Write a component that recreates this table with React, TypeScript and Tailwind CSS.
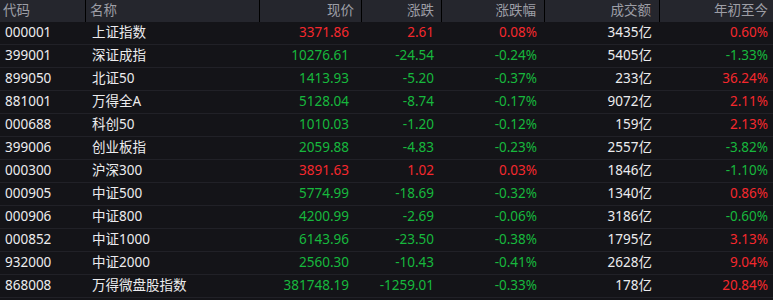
import React from "react";

type Row = {
  code: string;
  name: string;
  price: string;
  chg: string;
  pct: string;
  vol: string;
  ytd: string;
};

const rows: Row[] = [
  { code: "000001", name: "上证指数", price: "3371.86", chg: "2.61", pct: "0.08%", vol: "3435亿", ytd: "0.60%" },
  { code: "399001", name: "深证成指", price: "10276.61", chg: "-24.54", pct: "-0.24%", vol: "5405亿", ytd: "-1.33%" },
  { code: "899050", name: "北证50", price: "1413.93", chg: "-5.20", pct: "-0.37%", vol: "233亿", ytd: "36.24%" },
  { code: "881001", name: "万得全A", price: "5128.04", chg: "-8.74", pct: "-0.17%", vol: "9072亿", ytd: "2.11%" },
  { code: "000688", name: "科创50", price: "1010.03", chg: "-1.20", pct: "-0.12%", vol: "159亿", ytd: "2.13%" },
  { code: "399006", name: "创业板指", price: "2059.88", chg: "-4.83", pct: "-0.23%", vol: "2557亿", ytd: "-3.82%" },
  { code: "000300", name: "沪深300", price: "3891.63", chg: "1.02", pct: "0.03%", vol: "1846亿", ytd: "-1.10%" },
  { code: "000905", name: "中证500", price: "5774.99", chg: "-18.69", pct: "-0.32%", vol: "1340亿", ytd: "0.86%" },
  { code: "000906", name: "中证800", price: "4200.99", chg: "-2.69", pct: "-0.06%", vol: "3186亿", ytd: "-0.60%" },
  { code: "000852", name: "中证1000", price: "6143.96", chg: "-23.50", pct: "-0.38%", vol: "1795亿", ytd: "3.13%" },
  { code: "932000", name: "中证2000", price: "2560.30", chg: "-10.43", pct: "-0.41%", vol: "2628亿", ytd: "9.04%" },
  { code: "868008", name: "万得微盘股指数", price: "381748.19", chg: "-1259.01", pct: "-0.33%", vol: "178亿", ytd: "20.84%" },
];

const RED = "text-[#f5282d]";
const GREEN = "text-[#17b83d]";

const tone = (v: string) => (v.startsWith("-") ? GREEN : RED);

const gridCols = "grid grid-cols-[86px_174px_102px_80px_103px_115px_113px]";

export default function App() {
  return (
    <div
      className="w-[773px] h-[300px] overflow-hidden bg-[#141418] text-[13.5px] leading-none"
      style={{ fontFamily: '"Noto Sans", "Noto Sans CJK SC", sans-serif' }}
    >
      <div className={`${gridCols} h-[22px] bg-[#25262d] text-[#9d9ea6]`}>
        <div className="flex items-center pl-[3px] border-r border-black">代码</div>
        <div className="flex items-center pl-1 border-r border-black">名称</div>
        <div className="flex items-center justify-end pr-[7px] border-r border-black">现价</div>
        <div className="flex items-center justify-end pr-[7px] border-r border-black">涨跌</div>
        <div className="flex items-center justify-end pr-2 border-r border-black">涨跌幅</div>
        <div className="flex items-center justify-end pr-2 border-r border-black">成交额</div>
        <div className="flex items-center justify-end pr-[5px]">年初至今</div>
      </div>
      {rows.map((r) => (
        <div
          key={r.code}
          className={`${gridCols} h-[23px] border-b border-[#212127] text-[#ececee]`}
        >
          <div className="flex items-center pl-[5px]">{r.code}</div>
          <div className="flex items-center pl-[6px]">{r.name}</div>
          <div className={`flex items-center justify-end pr-[13px] ${tone(r.chg)}`}>{r.price}</div>
          <div className={`flex items-center justify-end pr-2 ${tone(r.chg)}`}>{r.chg}</div>
          <div className={`flex items-center justify-end pr-2 ${tone(r.pct)}`}>{r.pct}</div>
          <div className="flex items-center justify-end pr-2">{r.vol}</div>
          <div className={`flex items-center justify-end pr-[5px] ${tone(r.ytd)}`}>{r.ytd}</div>
        </div>
      ))}
    </div>
  );
}
